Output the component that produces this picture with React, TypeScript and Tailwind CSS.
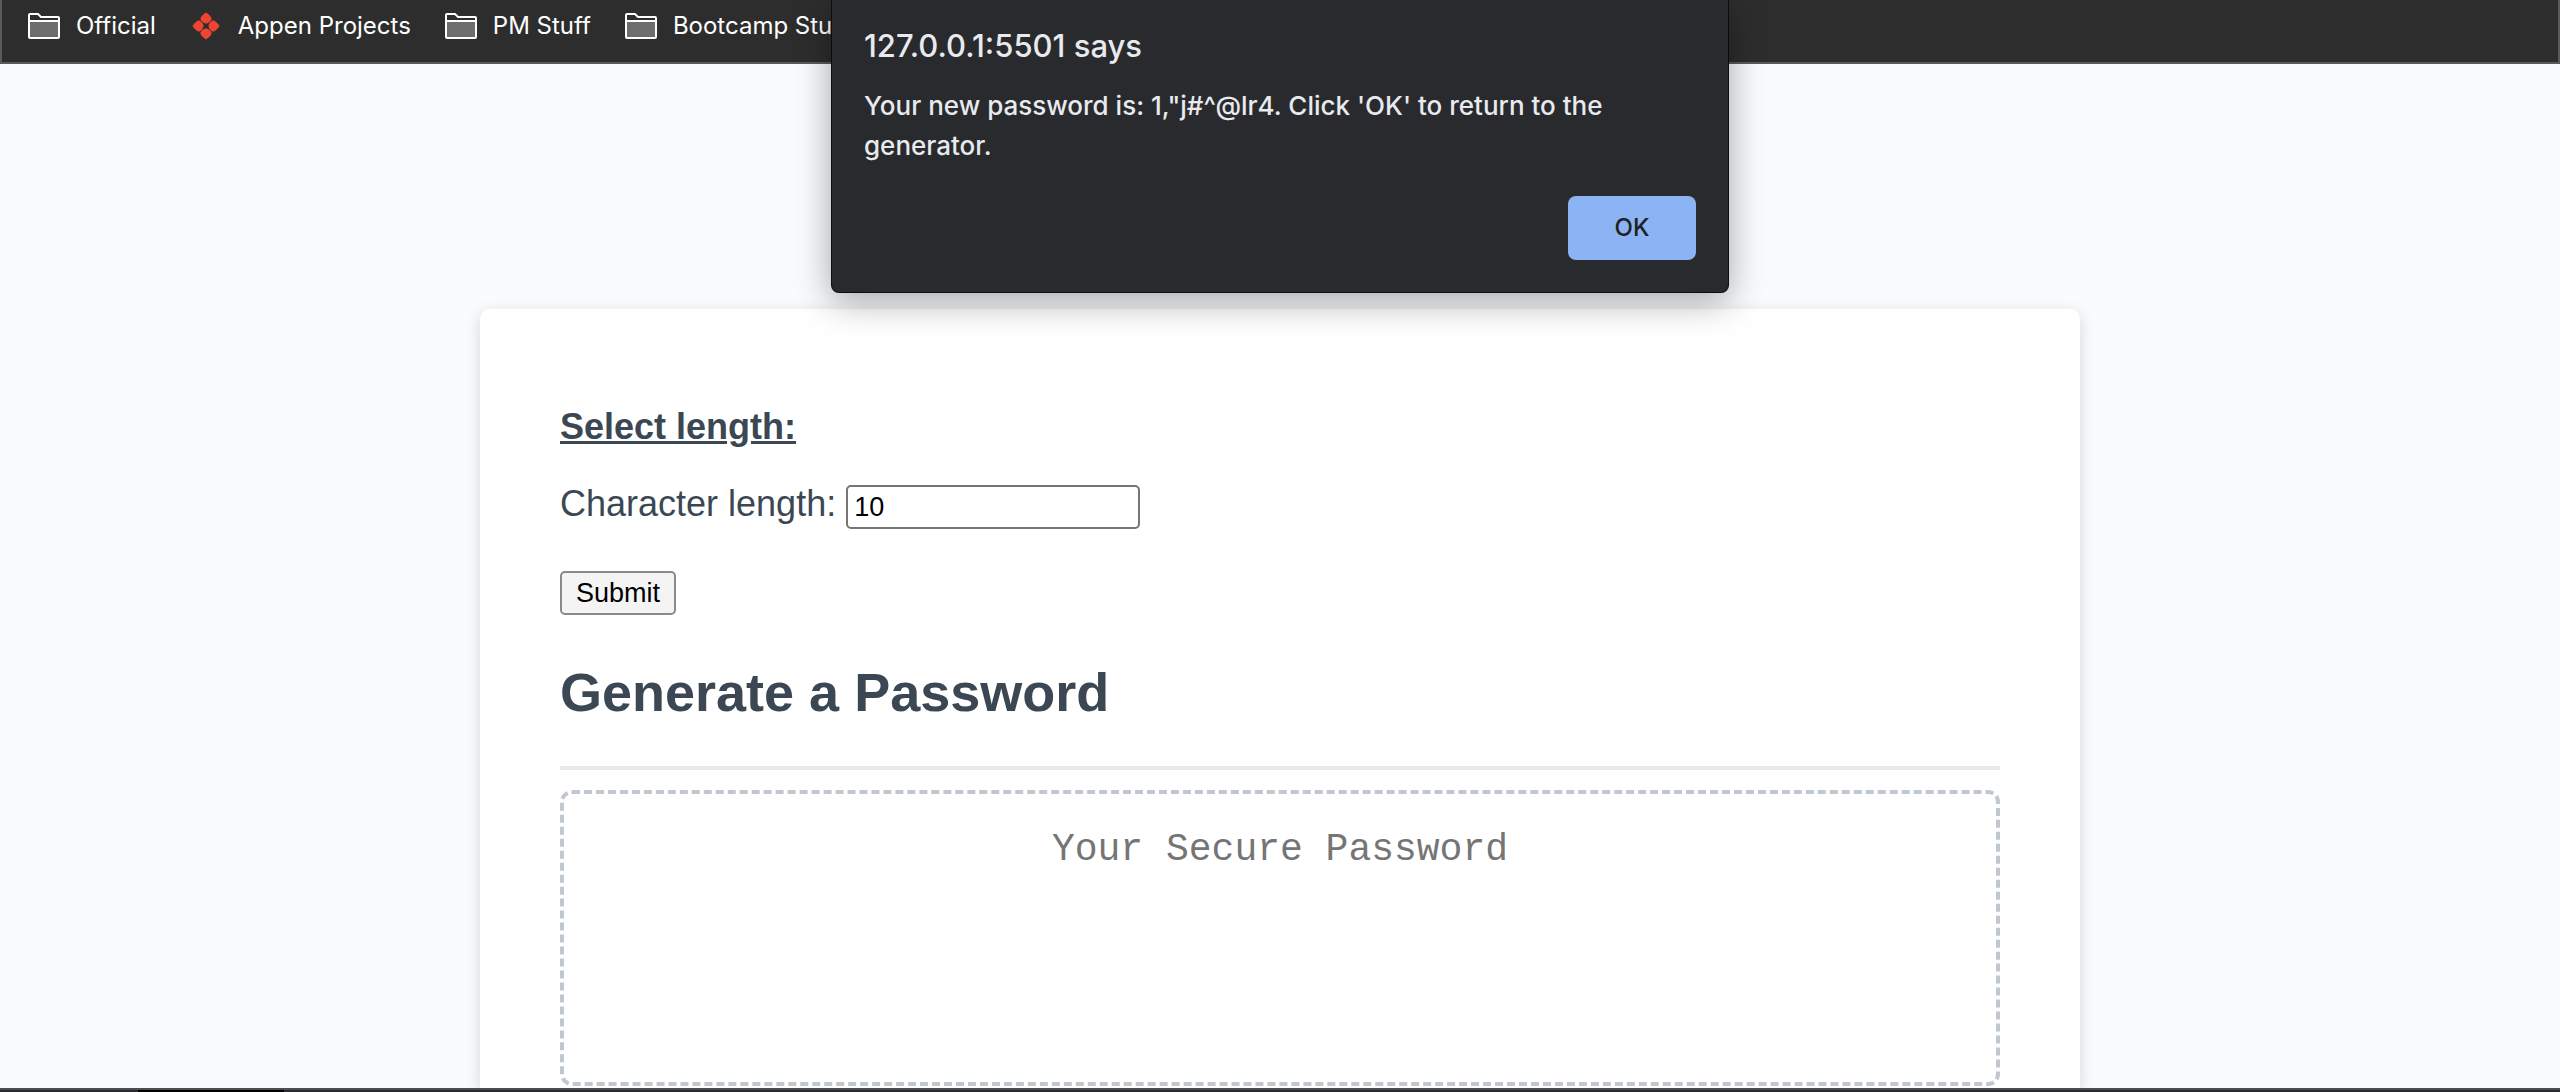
import React from "react";

function FolderIcon() {
  return (
    <svg width="32" height="26" viewBox="0 0 32 26" fill="none" aria-hidden="true">
      <path d="M2 9h28v15H2z" fill="#6e6e6e" />
      <path
        d="M1 24V2a1 1 0 0 1 1-1h8l3 3H30a1 1 0 0 1 1 1v19a1 1 0 0 1-1 1H2a1 1 0 0 1-1-1Z"
        stroke="#fff"
        strokeWidth="2"
      />
      <path d="M1 8h30" stroke="#fff" strokeWidth="2" />
    </svg>
  );
}

function AppenIcon() {
  const petal =
    "M14 0.500C16.500 2 18.500 4 19.500 6V7.500C18.500 9.500 16.500 11 14.700 11.500H13.300C11.500 11 9.500 9.500 8.500 7.500V6C9.500 4 11.500 2 14 0.500Z";
  return (
    <svg width="32" height="28" viewBox="-2 0 32 28" fill="#ee4432" aria-hidden="true">
      <path d={petal} />
      <path d={petal} transform="rotate(90 14 14)" />
      <path d={petal} transform="rotate(180 14 14)" />
      <path d={petal} transform="rotate(270 14 14)" />
    </svg>
  );
}

const bookmarks = [
  { label: "Official", kind: "folder" },
  { label: "Appen Projects", kind: "appen" },
  { label: "PM Stuff", kind: "folder" },
  { label: "Bootcamp Stuff", kind: "folder" },
];

function BookmarksBar() {
  return (
    <nav className="flex h-16 items-start gap-[34px] overflow-hidden border-x-2 border-b-2 border-[#5b5a5a] bg-[#2d2d2d] pl-[26px] font-[Inter,sans-serif] text-2xl leading-8 text-white">
      {bookmarks.map((b) => (
        <a
          key={b.label}
          href="#"
          className="flex h-[52px] shrink-0 items-center gap-4 whitespace-nowrap"
        >
          {b.kind === "folder" ? <FolderIcon /> : <AppenIcon />}
          {b.label}
        </a>
      ))}
    </nav>
  );
}

function AlertDialog() {
  return (
    <div
      role="alertdialog"
      aria-labelledby="alert-title"
      aria-describedby="alert-text"
      className="absolute top-0 left-1/2 flex w-[898px] max-w-full -translate-x-1/2 flex-col rounded-b-lg border border-t-0 border-black/70 bg-[#292a2d] px-8 pt-[26px] pb-8 font-[Inter,sans-serif] text-[#e8eaed] shadow-[0_8px_36px_rgba(0,0,0,0.35)]"
    >
      <h2 id="alert-title" className="text-[31px] leading-10 font-medium">
        127.0.0.1:5501 says
      </h2>
      <p id="alert-text" className="mt-5 text-[26px] leading-10 font-medium">
        Your new password is: 1,"j#^@lr4. Click 'OK' to return to the generator.
      </p>
      <button
        type="button"
        className="mt-[30px] h-16 w-32 self-end rounded-lg bg-[#8cb4f5] text-2xl font-medium text-[#202124]"
      >
        OK
      </button>
    </div>
  );
}

function GeneratorCard() {
  return (
    <section className="mx-auto mt-[245px] w-full max-w-[1600px] rounded-t-[10px] bg-white px-20 pt-[98px] pb-0.5 text-4xl leading-10 text-[#3b4854] shadow-[0_4px_16px_rgba(0,0,0,0.15)]">
      <form onSubmit={(e) => e.preventDefault()}>
        <h3 className="font-bold underline">Select length:</h3>
        <div className="mt-[37px] flex items-start gap-2.5">
          <label htmlFor="length">Character length:</label>
          <input
            id="length"
            type="text"
            defaultValue="10"
            className="mt-px h-11 w-[294px] rounded-[5px] border-2 border-[#767676] bg-white px-1.5 text-[27px] leading-8 text-black"
          />
        </div>
        <button
          type="submit"
          className="mt-[42px] block h-11 rounded-[5px] border-2 border-[#8a8a8a] bg-[#f4f4f4] px-3.5 text-[27px] leading-8 text-black"
        >
          Submit
        </button>
      </form>
      <h1 className="mt-[45px] text-[54px] leading-[64px] font-bold">Generate a Password</h1>
      <hr className="mt-[42px] border-t-4 border-[#e7e9eb]" />
      <textarea
        readOnly
        aria-label="Your Secure Password"
        placeholder="Your Secure Password"
        className="mt-5 block h-[296px] w-full resize-none rounded-xl border-4 border-dashed border-[#c0c7cf] px-9 py-[34px] text-center font-['Liberation_Mono',monospace] text-[38px] leading-[44px] placeholder:text-[#757575]"
      />
    </section>
  );
}

export default function App() {
  return (
    <div className="relative flex min-h-screen flex-col bg-[#f9fbfd] font-['Liberation_Sans',Arial,sans-serif]">
      <BookmarksBar />
      <main className="flex-1 overflow-hidden">
        <GeneratorCard />
      </main>
      <footer className="h-1 border-t-2 border-[#4c4d53] bg-[#2a2b31] pl-[138px]">
        <div className="h-0.5 w-[146px] bg-black" />
      </footer>
      <AlertDialog />
    </div>
  );
}
